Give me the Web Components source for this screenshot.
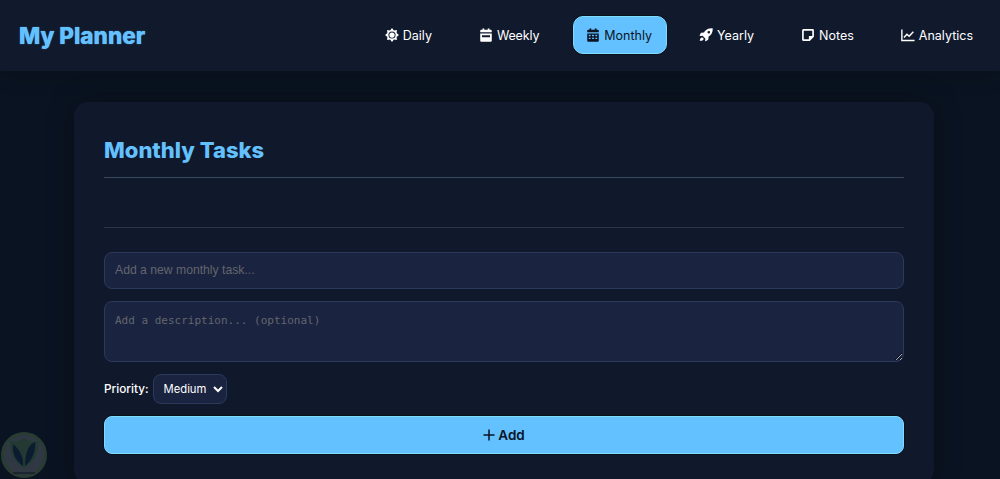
<!DOCTYPE html>
<html lang="en">
<head>
<meta charset="utf-8">
<title>My Planner</title>
<style>
  html, body { margin: 0; height: 100%; overflow: hidden; }
  body { background: #0a1321; font-family: Inter, "Open Sans", sans-serif; color: #fff; }
</style>
</head>
<body>
<planner-app>
  <planner-header slot="header">
    <span slot="brand">My Planner</span>
    <nav-item icon="sun">Daily</nav-item>
    <nav-item icon="calendar-day" style="letter-spacing:-.15px">Weekly</nav-item>
    <nav-item icon="calendar-alt" active>Monthly</nav-item>
    <nav-item icon="rocket">Yearly</nav-item>
    <nav-item icon="note">Notes</nav-item>
    <nav-item icon="chart">Analytics</nav-item>
  </planner-header>
  <task-panel heading="Monthly Tasks">
    <task-form placeholder="Add a new monthly task..."></task-form>
  </task-panel>
  <trust-badge></trust-badge>
</planner-app>

<script>
// Estrella de 8 puntas para el icono del sol
const sunPoints = Array.from({ length: 16 }, (_, i) => {
  const r = i % 2 ? 5.7 : 7.9;
  const a = (i * Math.PI) / 8 - Math.PI / 2;
  return `${(8 + r * Math.cos(a)).toFixed(2)},${(8 + r * Math.sin(a)).toFixed(2)}`;
}).join(' ');

// Iconos dibujados a mano, caja de 16x16
const ICONS = {
  'sun': `<polygon fill="currentColor" points="${sunPoints}"/><circle cx="8" cy="8" r="4.1" fill="#111a2e"/><circle cx="8" cy="8" r="3" fill="currentColor"/>`,
  'calendar-day': `<path fill="currentColor" fill-rule="evenodd" d="M4 .5h2v1.600h4V.5h2v1.600h1.200c.8 0 1.400.6 1.400 1.400v1.400H1.400V3.500c0-.8.6-1.400 1.400-1.400H4zM1.400 6.200h13.200v8c0 .8-.6 1.400-1.400 1.400H2.800c-.8 0-1.400-.6-1.400-1.400zM3.400 8.400v2.200h9.200V8.400z"/>`,
  'calendar-alt': `<path fill="currentColor" fill-rule="evenodd" d="M4 .5h2v1.600h4V.5h2v1.600h1.200c.8 0 1.400.6 1.400 1.400v1.400H1.400V3.500c0-.8.6-1.400 1.400-1.400H4zM1.400 6.200h13.200v8c0 .8-.6 1.400-1.400 1.400H2.800c-.8 0-1.400-.6-1.400-1.400zM3.200 7.800v1.700h2.100V7.800zm3.700 0v1.700h2.200V7.800zm3.800 0v1.700h2.100V7.800zM3.200 11v1.700h2.100V11zm3.700 0v1.700h2.200V11zm3.800 0v1.700h2.100V11z"/>`,
  'rocket': `<path fill="currentColor" fill-rule="evenodd" d="M15.600.4c.3 2.900-.4 6-3 8.300-.5.400-1 .8-1.600 1.100l-.3 3.100c0 .2-.2.4-.3.500L7.800 15.200c-.4.200-.8-.1-.8-.5l.2-2.700-3.200-3.200-2.700.2c-.4 0-.7-.4-.5-.8l1.300-2.600c.1-.2.3-.3.500-.3l3.100-.3c.3-.6.700-1.100 1.100-1.600C9.600.8 12.700.1 15.600.4zM11.200 3.300a1.500 1.500 0 1 0 0 3 1.500 1.500 0 0 0 0-3zM2.600 11c.9-.5 1.900 0 2.300.5.400.6.500 1.500-.2 2.100-.9.700-2.700.9-3.900 1.100.2-1.200.6-3.100 1.800-3.700z"/>`,
  'note': `<path fill="none" stroke="currentColor" stroke-width="1.900" stroke-linejoin="round" d="M2.700 2.200h10.600c.3 0 .5.200.5.500v6.900L9.600 13.800H2.700c-.3 0-.5-.2-.5-.5V2.700c0-.3.200-.5.500-.5z"/><path fill="currentColor" d="M9 9h5v1.200l-3.800 3.800H9z"/>`,
  'chart': `<path fill="none" stroke="currentColor" stroke-width="1.600" d="M1 1.800v12.400h14.500"/><path fill="none" stroke="currentColor" stroke-width="1.700" d="M3.400 10.800l3.400-3.700 2.500 2.300 4.800-5"/>`
};

class PlannerApp extends HTMLElement {
  constructor() {
    super();
    this.attachShadow({ mode: 'open' }).innerHTML = `
      <style>
        :host { display: block; position: relative; height: 100vh; overflow: hidden; }
        main { display: flex; justify-content: center; padding: 31px 0 0 8px; }
      </style>
      <slot name="header"></slot>
      <main><slot></slot></main>
    `;
  }
}

class PlannerHeader extends HTMLElement {
  constructor() {
    super();
    this.attachShadow({ mode: 'open' }).innerHTML = `
      <style>
        :host {
          display: flex; align-items: center; justify-content: space-between;
          height: 71px; padding: 0 12px 0 19px; box-sizing: border-box;
          background: #111a2d; border-bottom: 1px solid #0f1a2a;
          box-shadow: 0 4px 20px rgba(0,0,0,.16);
        }
        ::slotted([slot=brand]) {
          font: 800 22.500px Inter, sans-serif; color: #64c1ff;
          text-shadow: 0 0 1px #64c1ff;
        }
        nav { display: flex; gap: 19px; align-items: center; }
      </style>
      <slot name="brand"></slot>
      <nav><slot></slot></nav>
    `;
  }
}

class NavItem extends HTMLElement {
  constructor() {
    super();
    this.attachShadow({ mode: 'open' }).innerHTML = `
      <style>
        :host {
          display: inline-flex; align-items: center; gap: 4px;
          height: 38px; padding: 0 14px 0 12px; box-sizing: border-box;
          border: 1px solid transparent; border-radius: 10px;
          font: 400 12.500px Inter, sans-serif; color: #fff; white-space: nowrap;
        }
        :host([active]) {
          background: #64c1ff; color: #0b1525; border-color: #7fdcff;
          box-shadow: 0 0 0 1px rgba(0,0,0,.35);
        }
        svg { width: 14px; height: 14px; flex: none; }
      </style>
      <svg viewBox="0 0 16 16" aria-hidden="true"></svg>
      <span><slot></slot></span>
    `;
  }
  connectedCallback() {
    this.shadowRoot.querySelector('svg').innerHTML = ICONS[this.getAttribute('icon')] || '';
  }
}

class TaskPanel extends HTMLElement {
  constructor() {
    super();
    this.attachShadow({ mode: 'open' }).innerHTML = `
      <style>
        :host {
          display: block; width: 860px; box-sizing: border-box; flex: none;
          padding: 30px; background: #10192c; border-radius: 14px;
          box-shadow: 0 0 28px rgba(0,0,0,.25);
        }
        h2 {
          margin: 0; height: 46px; box-sizing: border-box;
          font: 800 22px/36px Inter, sans-serif; color: #64c1ff;
          border-bottom: 1px solid #3a4a60;
        }
        .list { height: 49px; border-bottom: 1px solid #2a3547; margin-bottom: 24px; }
      </style>
      <h2></h2>
      <div class="list"></div>
      <slot></slot>
    `;
  }
  connectedCallback() {
    this.shadowRoot.querySelector('h2').textContent = this.getAttribute('heading');
  }
}

class TaskForm extends HTMLElement {
  constructor() {
    super();
    this.attachShadow({ mode: 'open' }).innerHTML = `
      <style>
        :host { display: flex; flex-direction: column; gap: 12px; }
        input, textarea, select {
          background: #1a2340; border: 1px solid #2b3a5a; border-radius: 8px;
          color: #fff; box-sizing: border-box; outline: none;
        }
        input { height: 37px; padding: 0 10px 2px; font: 12.200px "Liberation Sans", sans-serif; }
        textarea { height: 61px; padding: 12px 10px; display: block; width: 100%; font: 11px "DejaVu Sans Mono", monospace; }
        ::placeholder { color: #63666d; opacity: 1; }
        .priority { display: flex; align-items: center; gap: 4px; font: 500 11.750px Inter, sans-serif; color: #fff; }
        select { height: 30px; width: 74px; padding: 0 0 0 6px; font: 11.250px Inter, sans-serif; }
        button {
          height: 38px; border: 1px solid #7fdcff; border-radius: 8px;
          background: #64c1ff; color: #0b1525; font: 600 13.500px Inter, sans-serif;
          box-shadow: 0 0 0 1px rgba(0,0,0,.35);
          display: flex; align-items: center; justify-content: center; gap: 3px;
        }
        button svg { width: 12px; height: 12px; }
      </style>
      <input type="text">
      <textarea placeholder="Add a description... (optional)"></textarea>
      <div class="priority">
        <label for="p">Priority:</label>
        <select id="p"><option>Low</option><option selected>Medium</option><option>High</option></select>
      </div>
      <button type="button">
        <svg viewBox="0 0 12 12" aria-hidden="true"><path d="M6 .5v11M.5 6h11" stroke="currentColor" stroke-width="1.500" fill="none"/></svg>
        Add
      </button>
    `;
  }
  connectedCallback() {
    this.shadowRoot.querySelector('input').placeholder = this.getAttribute('placeholder');
  }
}

// Sello semitransparente de la esquina inferior izquierda
class TrustBadge extends HTMLElement {
  constructor() {
    super();
    this.attachShadow({ mode: 'open' }).innerHTML = `
      <style>
        :host { position: absolute; left: 1px; top: 432px; width: 46px; height: 46px; display: block; opacity: .38; }
        svg { width: 100%; height: 100%; display: block; }
      </style>
      <svg viewBox="0 0 46 46" aria-hidden="true">
        <circle cx="23" cy="23" r="21.500" fill="#6b747c" stroke="#5a7f50" stroke-width="3"/>
        <path d="M9 9c5 1 10 0 14-3 4 3 9 4 14 3 1 10-2 20-14 27C12 29 8 19 9 9z" fill="#4a7a50"/>
        <path d="M12 12c-1 9 2 16 10 22 1-9-3-16-10-22zM34 10c-5 2-10 8-10 24 7-6 11-14 10-24z" fill="#0e2c4a"/>
        <path d="M12 41h22" stroke="#2b3842" stroke-width="1.500"/>
      </svg>
    `;
  }
}

customElements.define('planner-app', PlannerApp);
customElements.define('planner-header', PlannerHeader);
customElements.define('nav-item', NavItem);
customElements.define('task-panel', TaskPanel);
customElements.define('task-form', TaskForm);
customElements.define('trust-badge', TrustBadge);
</script>
</body>
</html>
